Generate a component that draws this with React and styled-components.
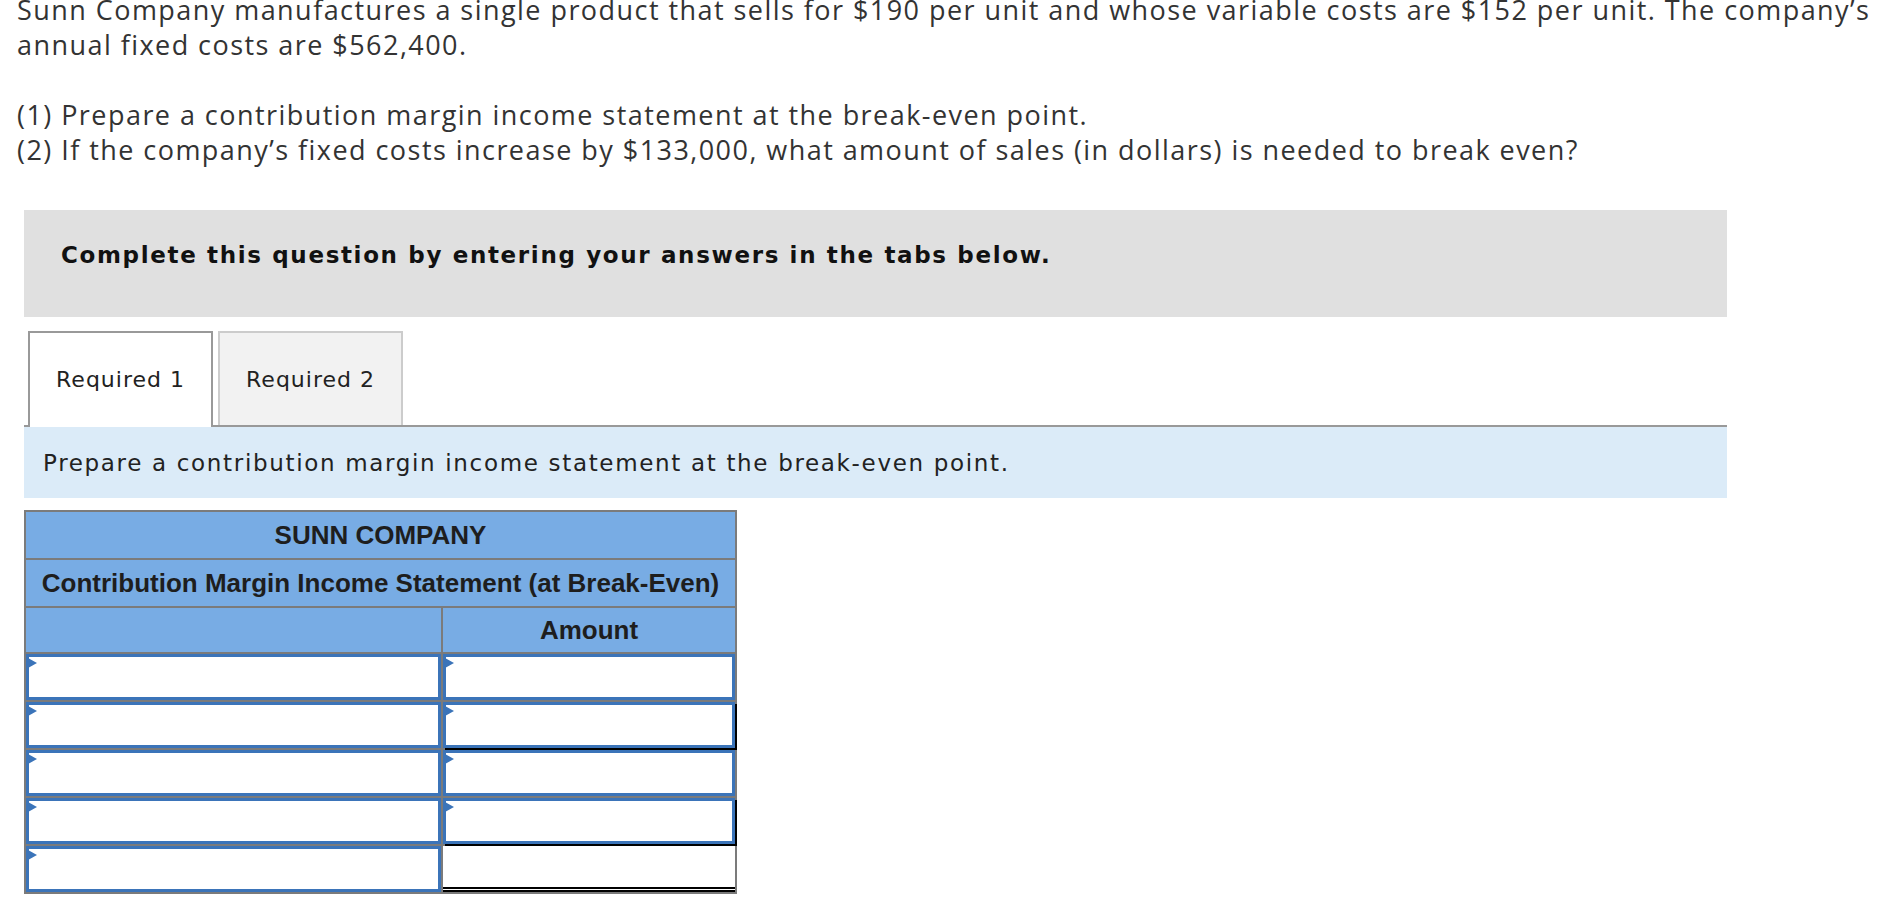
import React from 'react';
import styled, { createGlobalStyle } from 'styled-components';

const GlobalStyle = createGlobalStyle`
  html, body { margin: 0; padding: 0; background: #fff; }
  body { overflow: hidden; }
`;

const Page = styled.div`
  width: 1882px;
  height: 900px;
  overflow: hidden;
`;

const Question = styled.div`
  margin: -8px 0 0 17px;
  font-family: "Open Sans", Lato, sans-serif;
  font-size: 27px;
  letter-spacing: 1.45px;
  line-height: 35px;
  color: #333;
  white-space: nowrap;
`;

const Para = styled.p`
  margin: 0;
  & + & { margin-top: 35px; }
`;

const Work = styled.div`
  margin: 43px 0 0 24px;
  width: 1703px;
`;

const Instruction = styled.div`
  height: 107px;
  box-sizing: border-box;
  background: #e0e0e0;
  padding: 32px 0 0 37px;
  font-family: "DejaVu Sans", Verdana, sans-serif;
  font-weight: bold;
  font-size: 23px;
  letter-spacing: 1.65px;
  color: #111;
`;

const TabStrip = styled.div`
  display: flex;
  align-items: flex-start;
  gap: 5px;
  padding-left: 4px;
  margin-top: 14px;
  height: 94px;
  border-bottom: 2px solid #999;
`;

const Tab = styled.div`
  width: 185px;
  box-sizing: border-box;
  height: ${p => (p.$active ? '96px' : '94px')};
  border: 2px solid ${p => (p.$active ? '#999' : '#ccc')};
  border-bottom: none;
  background: ${p => (p.$active ? '#fff' : '#f2f2f2')};
  display: flex;
  align-items: center;
  justify-content: center;
  padding-bottom: ${p => (p.$active ? '2px' : '0')};
  font-family: "DejaVu Sans", Verdana, sans-serif;
  font-size: 22px;
  letter-spacing: 1px;
  color: #222;
`;

const Prompt = styled.div`
  height: 71px;
  background: #dbebf8;
  display: flex;
  align-items: center;
  padding-left: 19px;
  font-family: "DejaVu Sans", Verdana, sans-serif;
  font-size: 23px;
  letter-spacing: 1.67px;
  color: #222;
`;

const Statement = styled.div`
  margin-top: 12px;
  display: grid;
  grid-template-columns: 415px 292px;
  grid-template-rows: 46px 46px 44px repeat(5, 46px);
  gap: 2px;
  padding: 2px;
  width: max-content;
  background: #7b7b7b;
`;

const HeadCell = styled.div`
  grid-column: ${p => (p.$span ? '1 / span 2' : 'auto')};
  background: #78ace4;
  display: flex;
  align-items: center;
  justify-content: center;
  font-family: "Liberation Sans", Arial, sans-serif;
  font-weight: bold;
  font-size: 26px;
  color: #1e1e1e;
`;

const EntryCell = styled.div`
  position: relative;
  background: #fff;
  border: 3px solid #3b74b9;
  box-shadow: ${p => (p.$rule ? '2px 2px 0 #000' : 'none')};
  display: flex;
  &::before {
    content: '';
    position: absolute;
    left: -1px;
    top: 1px;
    border-left: 9px solid #3b74b9;
    border-top: 5px solid transparent;
    border-bottom: 5px solid transparent;
  }
`;

const Field = styled.input`
  flex: 1;
  min-width: 0;
  border: none;
  outline: none;
  background: transparent;
  padding: 0 14px;
  font-family: "Liberation Sans", Arial, sans-serif;
  font-size: 20px;
`;

const TotalCell = styled.div`
  background: #fff;
  border-bottom: 5px double #000;
`;

const rows = [
  { rule: false },
  { rule: true },
  { rule: false },
  { rule: true },
];

export default function App() {
  return (
    <Page>
      <GlobalStyle />
      <Question>
        <Para>
          Sunn Company manufactures a single product that sells for $190 per unit and whose variable costs are $152 per unit. The company’s
          <br />
          annual fixed costs are $562,400.
        </Para>
        <Para>
          (1) Prepare a contribution margin income statement at the break-even point.
          <br />
          (2) If the company’s fixed costs increase by $133,000, what amount of sales (in dollars) is needed to break even?
        </Para>
      </Question>
      <Work>
        <Instruction>Complete this question by entering your answers in the tabs below.</Instruction>
        <TabStrip>
          <Tab $active>Required 1</Tab>
          <Tab>Required 2</Tab>
        </TabStrip>
        <Prompt>Prepare a contribution margin income statement at the break-even point.</Prompt>
        <Statement>
          <HeadCell $span>SUNN COMPANY</HeadCell>
          <HeadCell $span>Contribution Margin Income Statement (at Break-Even)</HeadCell>
          <HeadCell />
          <HeadCell>Amount</HeadCell>
          {rows.map((r, i) => (
            <React.Fragment key={i}>
              <EntryCell>
                <Field aria-label={`Item ${i + 1}`} />
              </EntryCell>
              <EntryCell $rule={r.rule}>
                <Field aria-label={`Amount ${i + 1}`} />
              </EntryCell>
            </React.Fragment>
          ))}
          <EntryCell>
            <Field aria-label="Item 5" />
          </EntryCell>
          <TotalCell />
        </Statement>
      </Work>
    </Page>
  );
}
